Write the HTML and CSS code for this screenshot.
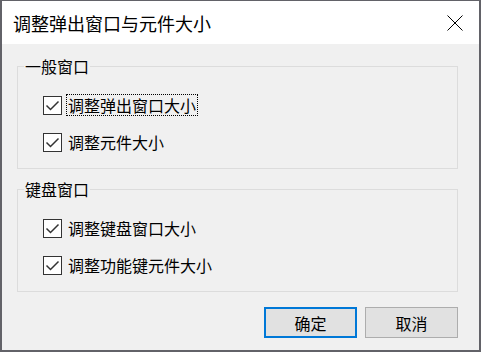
FILE: index.html
```html
<!DOCTYPE html>
<html lang="zh-CN">
<head>
  <meta charset="UTF-8">
  <title>调整弹出窗口与元件大小</title>
  <link rel="stylesheet" href="styles.css">
</head>
<body>
  <div class="window">
    <div class="titlebar">
      <span class="title">调整弹出窗口与元件大小</span>
      <span class="close">
        <svg width="16" height="16" viewBox="0 0 16 16"><path d="M0.5 0.5 L15.5 15.5 M15.5 0.5 L0.5 15.5" stroke="#000" stroke-width="1" fill="none"/></svg>
      </span>
    </div>
    <div class="content">
      <fieldset class="group">
        <legend>一般窗口</legend>
        <div class="row">
          <span class="box"><svg width="17" height="17" viewBox="0 0 17 17"><path d="M2.5 8.5 L6.5 12.5 L14.5 4.5" stroke="#333" stroke-width="1.5" fill="none"/></svg></span>
          <span class="label focused">调整弹出窗口大小</span>
        </div>
        <div class="row">
          <span class="box"><svg width="17" height="17" viewBox="0 0 17 17"><path d="M2.5 8.5 L6.5 12.5 L14.5 4.5" stroke="#333" stroke-width="1.5" fill="none"/></svg></span>
          <span class="label">调整元件大小</span>
        </div>
      </fieldset>
      <fieldset class="group second">
        <legend>键盘窗口</legend>
        <div class="row">
          <span class="box"><svg width="17" height="17" viewBox="0 0 17 17"><path d="M2.5 8.5 L6.5 12.5 L14.5 4.5" stroke="#333" stroke-width="1.5" fill="none"/></svg></span>
          <span class="label">调整键盘窗口大小</span>
        </div>
        <div class="row">
          <span class="box"><svg width="17" height="17" viewBox="0 0 17 17"><path d="M2.5 8.5 L6.5 12.5 L14.5 4.5" stroke="#333" stroke-width="1.5" fill="none"/></svg></span>
          <span class="label">调整功能键元件大小</span>
        </div>
      </fieldset>
      <div class="buttons">
        <button class="btn default">确定</button>
        <button class="btn">取消</button>
      </div>
    </div>
  </div>
</body>
</html>
```

FILE: styles.css
```css
body {
  margin: 0;
  font-family: "Noto Sans CJK SC", "Noto Sans", sans-serif;
  color: #000;
}
.window {
  width: 481px;
  height: 352px;
  box-sizing: border-box;
  border: 2px solid #626268;
  border-top-width: 1px;
  display: flex;
  flex-direction: column;
  background-color: #f0f0f0;
}
.titlebar {
  height: 43px;
  background-color: #fff;
  display: flex;
  align-items: center;
  justify-content: space-between;
  padding: 0 16px 0 11px;
}
.title {
  font-size: 18px;
  line-height: 24px;
}
.close {
  display: flex;
  padding-top: 1px;
}
.content {
  flex: 1;
  padding: 12px 21px 0 15px;
}
.group {
  margin: 0;
  border: 1px solid #dcdcdc;
  padding: 17px 0 14px 6px;
}
.group legend {
  font-size: 16px;
  line-height: 20px;
  padding: 0 1px;
}
.second {
  margin-top: 10px;
}
.row {
  display: flex;
  align-items: center;
  height: 24px;
  margin-left: 19px;
}
.row + .row {
  margin-top: 13px;
}
.box {
  width: 17px;
  height: 17px;
  border: 1px solid #333;
  background-color: #fff;
  display: flex;
}
.label {
  font-size: 16px;
  line-height: 20px;
  margin-left: 4px;
  padding: 0 1px;
  border: 1px solid transparent;
}
.label.focused {
  border: 1px dotted #000;
}
.buttons {
  display: flex;
  justify-content: flex-end;
  gap: 8px;
  margin-top: 15px;
}
.btn {
  width: 93px;
  height: 31px;
  box-sizing: border-box;
  background-color: #e1e1e1;
  border: 1px solid #adadad;
  font-family: "Noto Sans CJK SC", "Noto Sans", sans-serif;
  font-size: 16px;
  color: #000;
  padding: 0;
}
.btn.default {
  border: 2px solid #0078d7;
}
```
